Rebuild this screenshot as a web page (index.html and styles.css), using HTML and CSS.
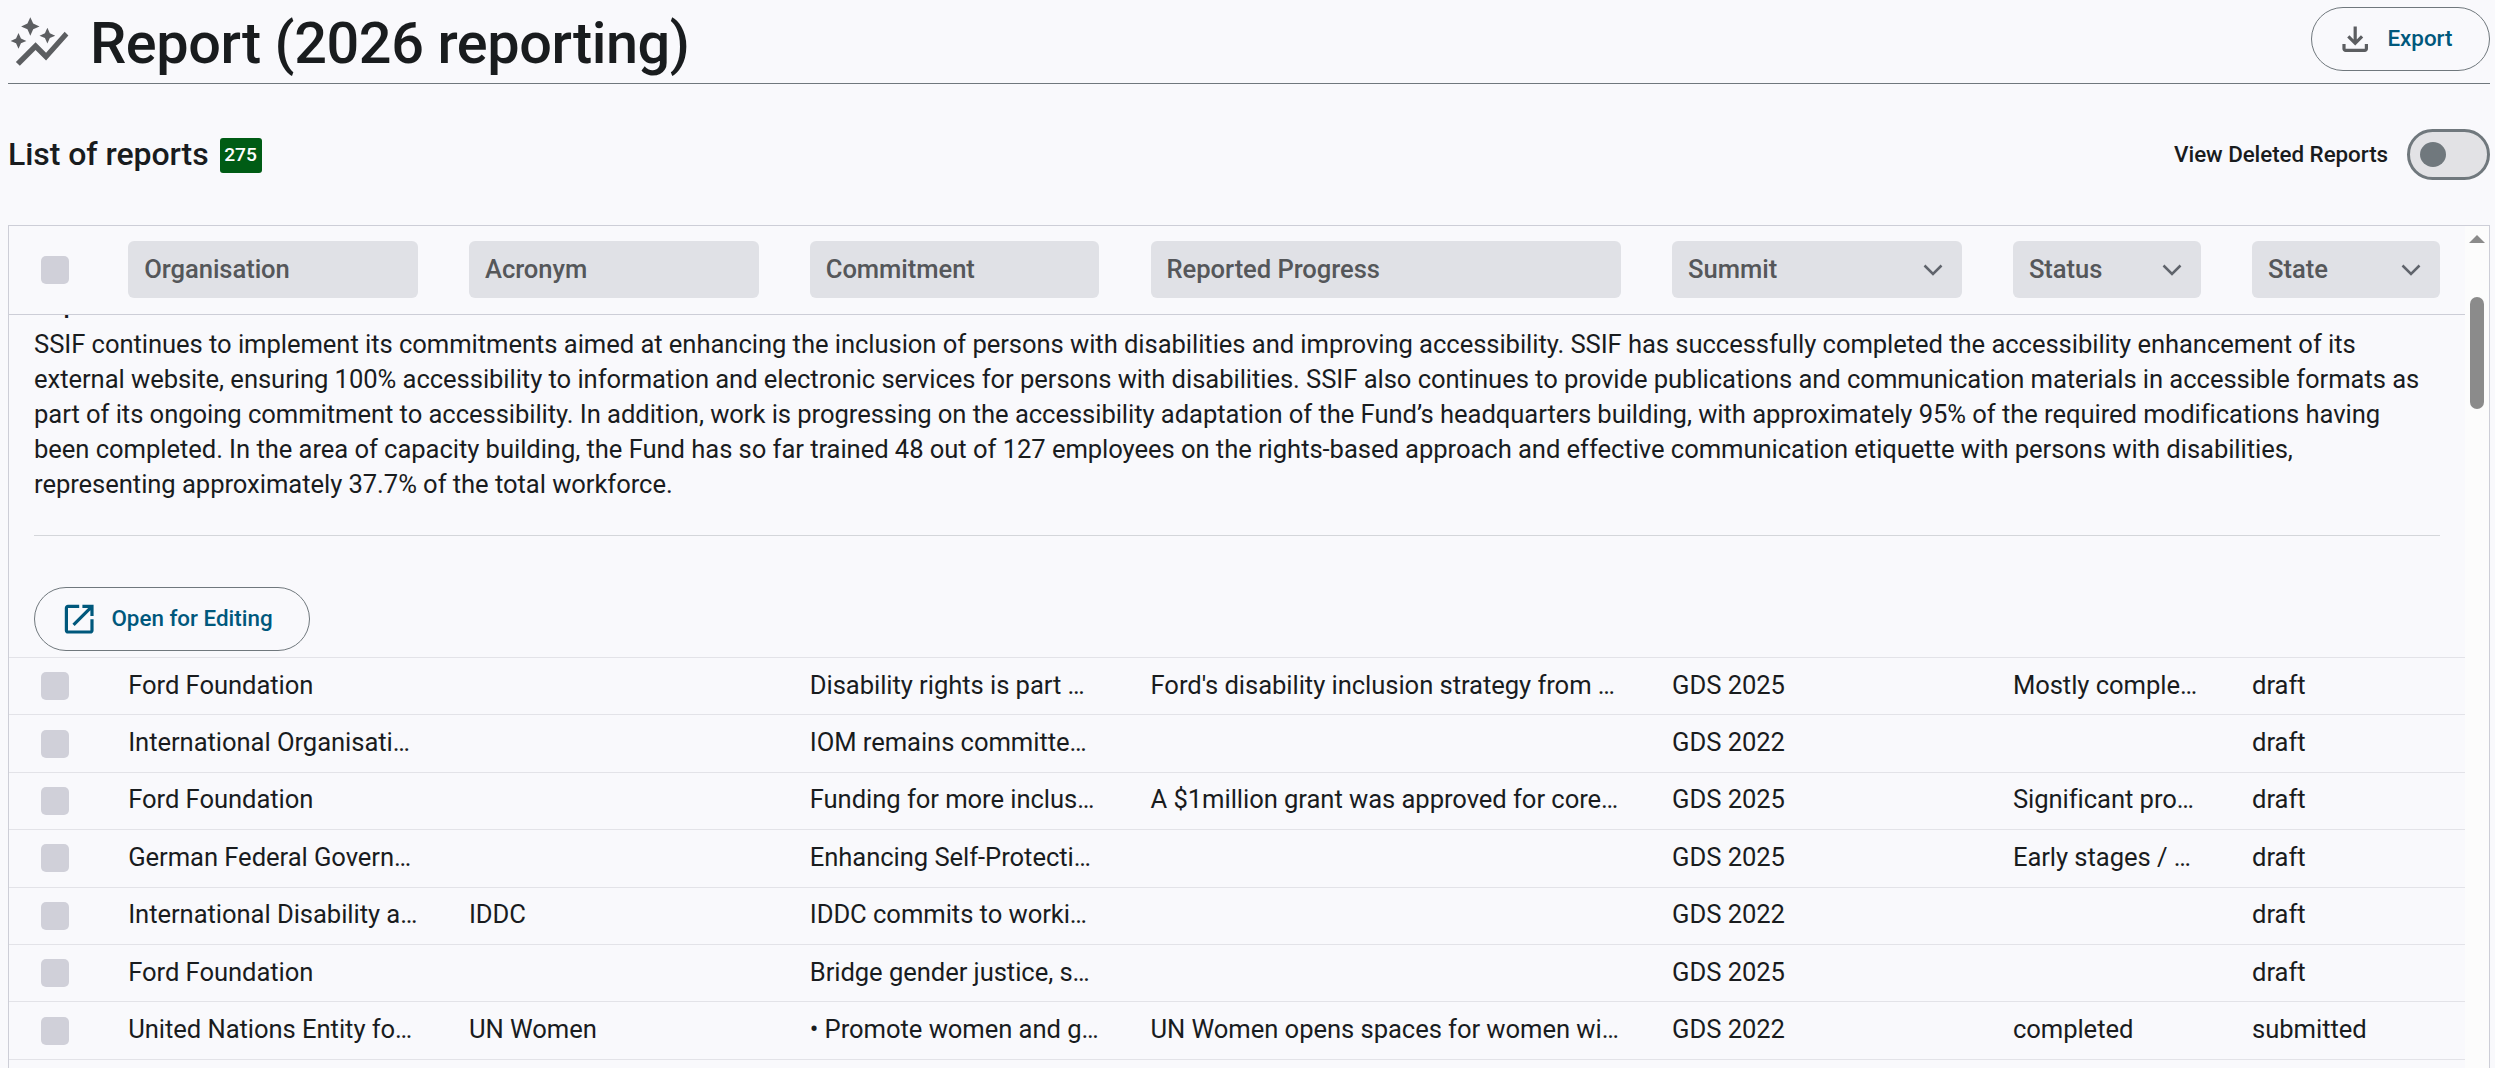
FILE: index.html
```html
<!DOCTYPE html>
<html lang="en">
<head>
  <meta charset="UTF-8">
  <title>Report (2026 reporting)</title>
  <link rel="stylesheet" href="styles.css">
</head>
<body>
  <header class="page-header">
    <svg class="title-icon" viewBox="0 0 24 24"><path d="M14.06 9.94L12 9l2.06-.94L15 6l.94 2.06L18 9l-2.06.94L15 12l-.94-2.06zM4 14l.94-2.06L7 11l-2.06-.94L4 8l-.94 2.06L1 11l2.06.94L4 14zm4.500-5l1.090-2.410L12 5.500 9.590 4.410 8.500 2 7.410 4.410 5 5.500l2.410 1.090L8.500 9zm-4 11.500l6-6.010 4 4L23 8.930l-1.410-1.410-7.090 7.970-4-4L3 19l1.500 1.500z"/></svg>
    <h1>Report (2026 reporting)</h1>
    <button class="btn export-btn">
      <svg class="btn-icon grey" viewBox="0 -960 960 960"><path d="M480-320 280-520l56-58 104 104v-326h80v326l104-104 56 58-200 200ZM240-160q-33 0-56.500-23.500T160-240v-120h80v120h480v-120h80v120q0 33-23.500 56.500T720-160H240Z"/></svg>
      <span>Export</span>
    </button>
  </header>

  <div class="list-header">
    <h2>List of reports</h2>
    <span class="count">275</span>
    <span class="toggle-label">View Deleted Reports</span>
    <span class="toggle"></span>
  </div>

  <div class="table-box">
    <div class="table">
      <div class="row filters">
        <span class="checkbox"></span>
        <div class="filter">Organisation</div>
        <div class="filter">Acronym</div>
        <div class="filter">Commitment</div>
        <div class="filter">Reported Progress</div>
        <div class="filter">Summit <svg class="chevron" viewBox="0 0 20 12"><path d="M1.500 1.500L10 10l8.500-8.500"/></svg></div>
        <div class="filter">Status <svg class="chevron" viewBox="0 0 20 12"><path d="M1.500 1.500L10 10l8.500-8.500"/></svg></div>
        <div class="filter">State <svg class="chevron" viewBox="0 0 20 12"><path d="M1.500 1.500L10 10l8.500-8.500"/></svg></div>
      </div>

      <div class="detail">
        <div class="detail-heading"><h3>Impact</h3></div>
        <p>SSIF continues to implement its commitments aimed at enhancing the inclusion of persons with disabilities and improving accessibility. SSIF has successfully completed the accessibility enhancement of its external website, ensuring 100% accessibility to information and electronic services for persons with disabilities. SSIF also continues to provide publications and communication materials in accessible formats as part of its ongoing commitment to accessibility. In addition, work is progressing on the accessibility adaptation of the Fund’s headquarters building, with approximately 95% of the required modifications having been completed. In the area of capacity building, the Fund has so far trained 48 out of 127 employees on the rights-based approach and effective communication etiquette with persons with disabilities, representing approximately 37.7% of the total workforce.</p>
        <hr>
        <button class="btn edit-btn">
          <svg class="btn-icon" viewBox="0 0 24 24"><path d="M19 19H5V5h7V3H5c-1.110 0-2 .9-2 2v14c0 1.100.890 2 2 2h14c1.100 0 2-.9 2-2v-7h-2v7zM14 3v2h3.590l-9.830 9.830 1.410 1.410L19 6.410V10h2V3h-7z"/></svg>
          <span>Open for Editing</span>
        </button>
      </div>

      <div class="row">
        <span class="checkbox"></span>
        <div>Ford Foundation</div><div></div><div>Disability rights is part …</div><div>Ford's disability inclusion strategy from …</div><div>GDS 2025</div><div>Mostly comple…</div><div>draft</div>
      </div>
      <div class="row">
        <span class="checkbox"></span>
        <div>International Organisati…</div><div></div><div>IOM remains committe…</div><div></div><div>GDS 2022</div><div></div><div>draft</div>
      </div>
      <div class="row">
        <span class="checkbox"></span>
        <div>Ford Foundation</div><div></div><div>Funding for more inclus…</div><div>A $1million grant was approved for core…</div><div>GDS 2025</div><div>Significant pro…</div><div>draft</div>
      </div>
      <div class="row">
        <span class="checkbox"></span>
        <div>German Federal Govern…</div><div></div><div>Enhancing Self-Protecti…</div><div></div><div>GDS 2025</div><div>Early stages / …</div><div>draft</div>
      </div>
      <div class="row">
        <span class="checkbox"></span>
        <div>International Disability a…</div><div>IDDC</div><div>IDDC commits to worki…</div><div></div><div>GDS 2022</div><div></div><div>draft</div>
      </div>
      <div class="row">
        <span class="checkbox"></span>
        <div>Ford Foundation</div><div></div><div>Bridge gender justice, s…</div><div></div><div>GDS 2025</div><div></div><div>draft</div>
      </div>
      <div class="row">
        <span class="checkbox"></span>
        <div>United Nations Entity fo…</div><div>UN Women</div><div>• Promote women and g…</div><div>UN Women opens spaces for women wi…</div><div>GDS 2022</div><div>completed</div><div>submitted</div>
      </div>
    </div>
    <div class="scrollbar">
      <svg class="scroll-arrow" viewBox="0 0 16 8"><path d="M8 0l8 8H0z"/></svg>
      <div class="thumb"></div>
    </div>
  </div>
</body>
</html>
```
FILE: styles.css
```css
* {
  box-sizing: border-box;
}
body {
  margin: 0;
  padding: 0 5px 0 8px;
  height: 1068px;
  overflow: hidden;
  font-family: Roboto, sans-serif;
  font-size: 25.6px;
  letter-spacing: -0.06px;
  color: #191c1e;
  background: #f9f9fc;
}
h1, h2, h3, p {
  margin: 0;
  font-weight: 500;
}
.page-header {
  display: flex;
  align-items: center;
  height: 84px;
  border-bottom: 1px solid #70787d;
}
.title-icon {
  width: 63px;
  height: 63px;
  margin-top: 4px;
  fill: #5c5e61;
}
h1 {
  font-size: 57.6px;
  letter-spacing: -0.4px;
  margin-left: 19px;
  padding-top: 3px;
}
.btn {
  display: flex;
  align-items: center;
  height: 64px;
  border: 1px solid #70787d;
  border-radius: 32px;
  background: none;
  color: #00587c;
  font: 500 22.4px Roboto, sans-serif;
  padding: 0;
}
.btn span {
  padding-bottom: 3px;
}
.btn-icon {
  width: 38.4px;
  height: 38.4px;
  fill: #00587c;
}
.btn-icon.grey {
  fill: #5c5e61;
}
.export-btn {
  width: 179px;
  margin-left: auto;
  margin-bottom: 5px;
  padding-left: 24px;
  gap: 13px;
}
.list-header {
  display: flex;
  align-items: center;
  height: 141px;
  padding-bottom: 1px;
}
h2 {
  font-size: 32px;
  padding-bottom: 1px;
}
.count {
  margin-left: 11px;
  margin-top: 3px;
  width: 42px;
  height: 35px;
  line-height: 34px;
  border-radius: 3px;
  background: #005c15;
  color: #fff;
  font-size: 19.2px;
  font-weight: 500;
  text-align: center;
}
.toggle-label {
  margin-left: auto;
  font-size: 22.4px;
  font-weight: 500;
  padding-bottom: 1px;
}
.toggle {
  width: 83px;
  height: 51px;
  margin-left: 19px;
  padding: 10px;
  border: 3px solid #70787d;
  border-radius: 26px;
  background: #e2e2e5;
}
.toggle::before {
  content: "";
  display: block;
  width: 26px;
  height: 25px;
  border-radius: 50%;
  background: #70787d;
}
.table-box {
  display: flex;
  height: 860px;
  border: 1px solid #cdced7;
}
.table {
  width: 2456px;
}
.row {
  display: grid;
  grid-template-columns: 36px 289.6px 289.6px 289.6px 470.4px 289.6px 188px 188px;
  column-gap: 51.2px;
  align-items: center;
  height: 57.4px;
  padding-left: 32px;
  border-bottom: 1px solid #e3e3e8;
  white-space: nowrap;
}
.row > div {
  padding-bottom: 3px;
}
.checkbox {
  width: 28px;
  height: 28px;
  border-radius: 5px;
  background: #d0d0d9;
}
.filters {
  height: 89px;
  padding-bottom: 1px;
  border-color: #cdced7;
}
.row > .filter {
  display: flex;
  align-items: center;
  justify-content: space-between;
  height: 57px;
  padding: 0 19px 1px 16px;
  border-radius: 6px;
  background: #e0e1e6;
  color: #55575a;
  font-weight: 500;
}
.chevron {
  width: 20px;
  height: 12px;
  margin-top: 2px;
  fill: none;
  stroke: #60646c;
  stroke-width: 2.500;
}
.detail {
  height: 343px;
  padding: 0 25px;
  border-bottom: 1px solid #e3e3e8;
}
/* heading is scrolled under the filter row */
.detail-heading {
  display: flex;
  align-items: flex-end;
  height: 12px;
  padding-bottom: 6px;
  overflow: hidden;
}
.detail-heading h3 {
  font-size: 25.6px;
  line-height: 33px;
  height: 33px;
  flex: none;
}
.detail p {
  line-height: 35px;
  font-weight: 400;
}
.detail hr {
  margin: 33px 0 51px;
  border: 0;
  border-top: 1px solid #d4d6da;
}
.edit-btn {
  width: 276px;
  padding-left: 25px;
  gap: 13px;
}
.scrollbar {
  display: flex;
  flex-direction: column;
  align-items: center;
  flex: 1;
  background: #fcfcfc;
}
.scroll-arrow {
  width: 16px;
  height: 8px;
  margin-top: 9px;
  fill: #8b8b8b;
}
.thumb {
  width: 14px;
  height: 112px;
  margin-top: 54px;
  border-radius: 7px;
  background: #8b8b8b;
}
```
